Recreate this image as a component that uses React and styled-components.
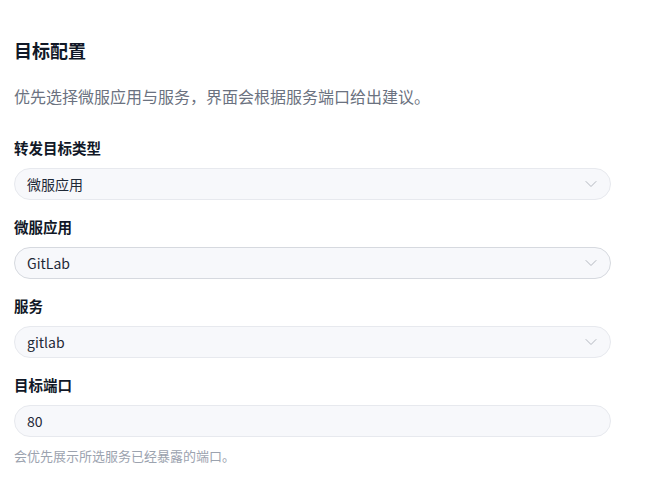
import styled, { createGlobalStyle } from "styled-components";
import { ChevronDown } from "lucide-react";

const GlobalStyle = createGlobalStyle`
  body {
    margin: 0;
    background: #ffffff;
    font-family: "Noto Sans CJK SC", "Noto Sans", sans-serif;
  }
`;

const Panel = styled.section`
  width: 597px;
  padding: 38px 14px 20px;
`;

const Title = styled.h2`
  margin: 0;
  font-size: 18px;
  line-height: 24px;
  font-weight: 700;
  color: #111827;
`;

const Desc = styled.p`
  margin: 23px 0 0;
  font-size: 16px;
  line-height: 22px;
  color: #6b7280;
`;

const Form = styled.div`
  display: flex;
  flex-direction: column;
  gap: 17px;
  margin-top: 31px;
`;

const Field = styled.div`
  display: flex;
  flex-direction: column;
  gap: 10px;
`;

const Label = styled.label`
  font-size: 14.5px;
  line-height: 20px;
  font-weight: 700;
  color: #111827;
`;

const Control = styled.div`
  height: 32px;
  box-sizing: border-box;
  display: flex;
  align-items: center;
  justify-content: space-between;
  padding: 0 9px 0 12px;
  border: 1px solid ${(p) => (p.$active ? "#d6d9df" : "#e7e9ee")};
  border-radius: 16px;
  background: #f7f8fb;
  font-size: 14px;
  color: #1f2937;
`;

const Arrow = styled(ChevronDown)`
  color: #b4b8c0;
`;

const Hint = styled.p`
  margin: 10px 0 0;
  font-size: 13px;
  line-height: 18px;
  color: #9ca3af;
`;

const fields = [
  { label: "转发目标类型", value: "微服应用", select: true },
  { label: "微服应用", value: "GitLab", select: true, active: true },
  { label: "服务", value: "gitlab", select: true },
  { label: "目标端口", value: "80" },
];

export default function App() {
  return (
    <>
      <GlobalStyle />
      <Panel>
        <Title>目标配置</Title>
        <Desc>优先选择微服应用与服务，界面会根据服务端口给出建议。</Desc>
        <Form>
          {fields.map((f) => (
            <Field key={f.label}>
              <Label>{f.label}</Label>
              <Control $active={f.active}>
                <span>{f.value}</span>
                {f.select && <Arrow size={20} strokeWidth={1.2} />}
              </Control>
            </Field>
          ))}
        </Form>
        <Hint>会优先展示所选服务已经暴露的端口。</Hint>
      </Panel>
    </>
  );
}
